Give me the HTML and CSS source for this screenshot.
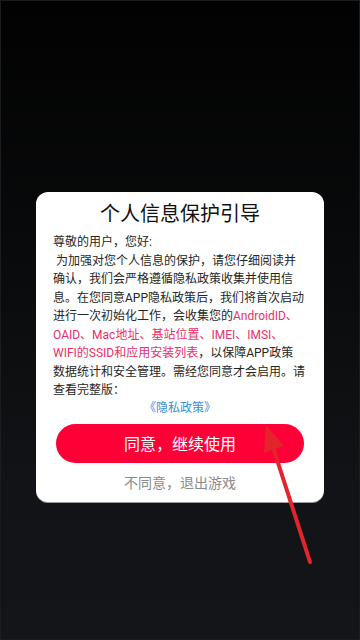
FILE: index.html
```html
<!DOCTYPE html>
<html lang="zh-CN">
<head>
<meta charset="utf-8">
<meta name="viewport" content="width=360, initial-scale=1">
<link rel="stylesheet" href="styles.css">
</head>
<body>
<div class="screen">
  <div class="dialog">
    <h1 class="title">个人信息保护引导</h1>
    <p class="body">尊敬的用户，您好:<br>&nbsp;为加强对您个人信息的保护，请您仔细阅读并<br>确认，我们会严格遵循隐私政策收集并使用信<br>息。在您同意APP隐私政策后，我们将首次启动<br>进行一次初始化工作，会收集您的<span class="hl">AndroidID、<br>OAID、Mac地址、基站位置、IMEI、IMSI、<br>WIFI的SSID和应用安装列表</span>，以保障APP政策<br>数据统计和安全管理。需经您同意才会启用。请<br>查看完整版：</p>
    <a class="link">《隐私政策》</a>
    <button class="agree">同意，继续使用</button>
    <div class="decline">不同意，退出游戏</div>
  </div>
  <svg class="arrow" width="360" height="640" viewBox="0 0 360 640">
    <line x1="310" y1="562" x2="272" y2="444" stroke="#e3242b" stroke-width="4" stroke-linecap="round"/>
    <polygon points="266,425 264,453 284,446" fill="#e3242b"/>
  </svg>
</div>
</body>
</html>
```
FILE: styles.css
```css
* { box-sizing: border-box; }
html, body { margin: 0; padding: 0; }
body {
  width: 360px;
  height: 640px;
  overflow: hidden;
  font-family: Roboto, "Noto Sans CJK SC", sans-serif;
}
.screen {
  position: relative;
  width: 360px;
  height: 640px;
  background: linear-gradient(180deg, #020202 0%, #08090a 35%, #111316 75%, #131519 100%);
  box-shadow: inset 0 0 0 1px #1b1c1e;
  padding-top: 192px;
  display: flex;
  flex-direction: column;
  align-items: center;
}
.dialog {
  width: 288px;
  background: #fff;
  border-radius: 12px;
  padding: 8px 17px 9px;
  display: flex;
  flex-direction: column;
  align-items: stretch;
  box-shadow: 0 1px 0 #9a9a9a;
}
.title {
  margin: 0;
  font-size: 20px;
  font-weight: 400;
  line-height: 28px;
  color: #111;
  text-align: center;
}
.body {
  margin: 5px 0 0;
  font-size: 12px;
  line-height: 18.5px;
  color: #262626;
  white-space: nowrap;
}
.hl { color: #e8306a; }
.link {
  display: block;
  text-align: center;
  font-size: 12px;
  line-height: 16px;
  color: #3b8fd8;
}
.agree {
  margin: 8px auto 0;
  width: 248px;
  height: 39px;
  border: none;
  border-radius: 20px;
  background: #ff0036;
  color: #fff;
  font-family: inherit;
  font-size: 16px;
  padding: 0;
}
.decline {
  margin-top: 10px;
  text-align: center;
  font-size: 14px;
  line-height: 20px;
  color: #8a8a8a;
}
.arrow {
  position: absolute;
  left: 0;
  top: 0;
  pointer-events: none;
}
```
